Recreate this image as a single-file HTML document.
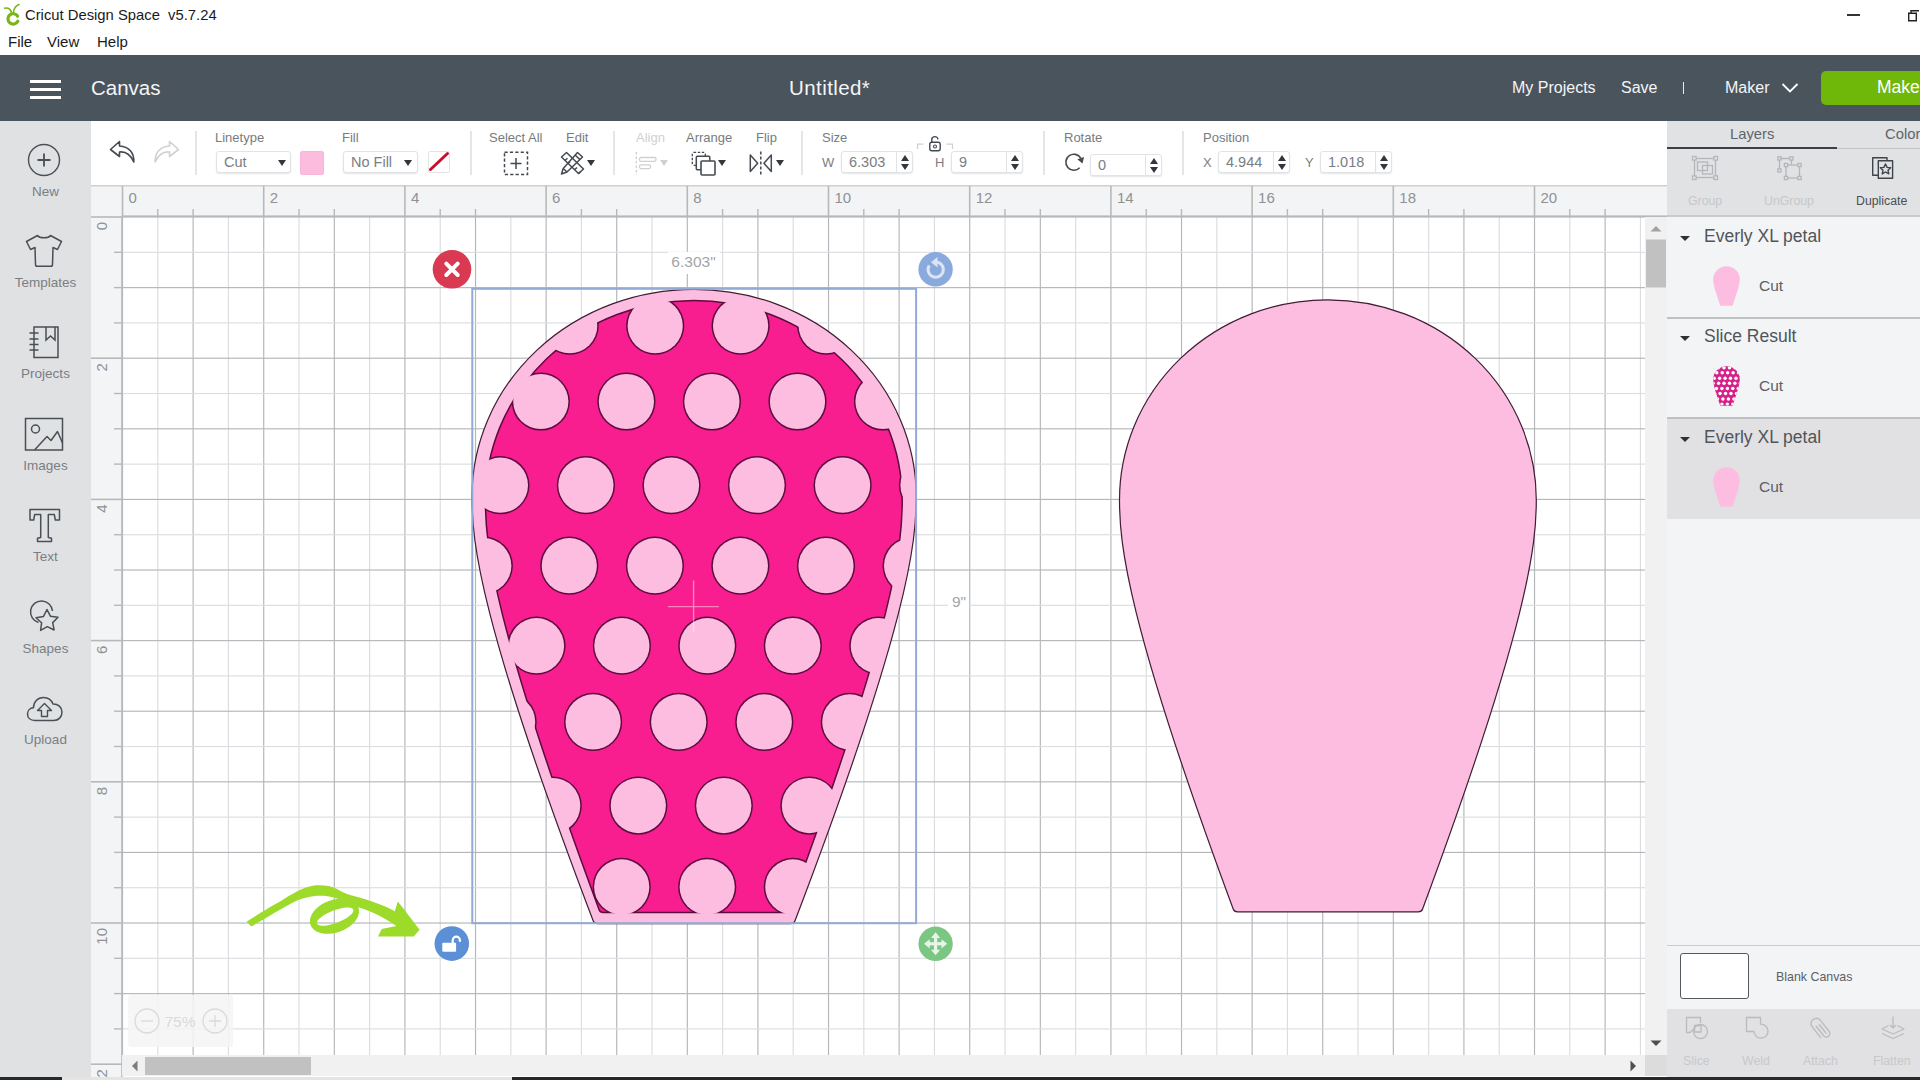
<!DOCTYPE html>
<html><head><meta charset="utf-8"><title>Cricut Design Space</title>
<style>
html,body{margin:0;padding:0;background:#fff;}
body{width:1920px;height:1080px;overflow:hidden;position:relative;font-family:"Liberation Sans",sans-serif;}
.abs{position:absolute;}
.t{position:absolute;white-space:nowrap;line-height:1;}
.sb{left:0;width:91px;text-align:center;font-size:13.5px;color:#7a7e83;}
.lbl{top:131px;font-size:13px;color:#777b80;}
.vdiv{position:absolute;top:131px;width:1.5px;height:44px;background:#e4e5e6;}
.inp{position:absolute;box-sizing:border-box;border:1px solid #e2e3e4;border-radius:3px;background:#fff;box-shadow:0 1px 1.5px rgba(0,0,0,0.10);}
.inp span{position:absolute;top:3px;font-size:14.5px;color:#7a7e83;line-height:1;white-space:nowrap;}
.dd{position:absolute;width:0;height:0;border-style:solid;border-width:6px 4.5px 0 4.5px;border-color:#33373c transparent transparent transparent;}
.spv{position:absolute;left:54px;top:0;width:1px;height:20px;background:#e2e3e4;}
.up{position:absolute;left:58.5px;top:3px;width:0;height:0;border-style:solid;border-width:0 4px 6px 4px;border-color:transparent transparent #33373c transparent;}
.dn{position:absolute;left:58.5px;top:11.5px;width:0;height:0;border-style:solid;border-width:6px 4px 0 4px;border-color:#33373c transparent transparent transparent;}
</style></head><body>

<svg id="cv" width="1920" height="1080" viewBox="0 0 1920 1080" style="position:absolute;left:0;top:0" font-family="Liberation Sans, sans-serif">
<defs>
<clipPath id="cvclip"><rect x="122" y="217" width="1523" height="838"/></clipPath>
<mask id="mA" maskUnits="userSpaceOnUse" x="0" y="0" width="1920" height="1080"><path d="M485.40,500.60 A208.40,200.20 0 0 1 902.20,500.60 C902.20,544.60 895.40,620.90 788.40,909.90 Q787.60,912.40 784.10,912.40 L603.50,912.40 Q600.00,912.40 599.20,909.90 C492.20,620.90 485.40,544.60 485.40,500.60Z" fill="#fff" stroke="#fff" stroke-width="1.5"/><g fill="#000"><circle cx="569.7" cy="325.7" r="27.6" /><circle cx="655.2" cy="325.7" r="27.6" /><circle cx="740.6" cy="325.7" r="27.6" /><circle cx="826.2" cy="325.7" r="27.6" /><circle cx="540.8" cy="401.5" r="27.6" /><circle cx="626.4" cy="401.5" r="27.6" /><circle cx="711.9" cy="401.5" r="27.6" /><circle cx="797.5" cy="401.5" r="27.6" /><circle cx="883.0" cy="401.5" r="27.6" /><circle cx="500.4" cy="485.2" r="27.6" /><circle cx="585.9" cy="485.2" r="27.6" /><circle cx="671.5" cy="485.2" r="27.6" /><circle cx="757.0" cy="485.2" r="27.6" /><circle cx="842.6" cy="485.2" r="27.6" /><circle cx="928.0" cy="485.2" r="27.6" /><circle cx="483.8" cy="565.7" r="27.6" /><circle cx="569.3" cy="565.7" r="27.6" /><circle cx="654.9" cy="565.7" r="27.6" /><circle cx="740.4" cy="565.7" r="27.6" /><circle cx="826.0" cy="565.7" r="27.6" /><circle cx="911.6" cy="565.7" r="27.6" /><circle cx="536.5" cy="645.7" r="27.6" /><circle cx="621.9" cy="645.7" r="27.6" /><circle cx="707.3" cy="645.7" r="27.6" /><circle cx="792.8" cy="645.7" r="27.6" /><circle cx="878.3" cy="645.7" r="27.6" /><circle cx="507.6" cy="721.9" r="27.6" /><circle cx="593.1" cy="721.9" r="27.6" /><circle cx="678.7" cy="721.9" r="27.6" /><circle cx="764.3" cy="721.9" r="27.6" /><circle cx="849.8" cy="721.9" r="27.6" /><circle cx="552.7" cy="805.6" r="27.6" /><circle cx="638.3" cy="805.6" r="27.6" /><circle cx="723.8" cy="805.6" r="27.6" /><circle cx="809.4" cy="805.6" r="27.6" /><circle cx="895.0" cy="805.6" r="27.6" /><circle cx="536.2" cy="886.9" r="27.6" /><circle cx="621.7" cy="886.9" r="27.6" /><circle cx="707.2" cy="886.9" r="27.6" /><circle cx="792.8" cy="886.9" r="27.6" /><circle cx="878.3" cy="886.9" r="27.6" /></g></mask>
<mask id="mB" maskUnits="userSpaceOnUse" x="0" y="0" width="1920" height="1080"><path d="M485.40,500.60 A208.40,200.20 0 0 1 902.20,500.60 C902.20,544.60 895.40,620.90 788.40,909.90 Q787.60,912.40 784.10,912.40 L603.50,912.40 Q600.00,912.40 599.20,909.90 C492.20,620.90 485.40,544.60 485.40,500.60Z" fill="#fff" stroke="#000" stroke-width="1.5"/><g fill="#000"><circle cx="569.7" cy="325.7" r="29.1" /><circle cx="655.2" cy="325.7" r="29.1" /><circle cx="740.6" cy="325.7" r="29.1" /><circle cx="826.2" cy="325.7" r="29.1" /><circle cx="540.8" cy="401.5" r="29.1" /><circle cx="626.4" cy="401.5" r="29.1" /><circle cx="711.9" cy="401.5" r="29.1" /><circle cx="797.5" cy="401.5" r="29.1" /><circle cx="883.0" cy="401.5" r="29.1" /><circle cx="500.4" cy="485.2" r="29.1" /><circle cx="585.9" cy="485.2" r="29.1" /><circle cx="671.5" cy="485.2" r="29.1" /><circle cx="757.0" cy="485.2" r="29.1" /><circle cx="842.6" cy="485.2" r="29.1" /><circle cx="928.0" cy="485.2" r="29.1" /><circle cx="483.8" cy="565.7" r="29.1" /><circle cx="569.3" cy="565.7" r="29.1" /><circle cx="654.9" cy="565.7" r="29.1" /><circle cx="740.4" cy="565.7" r="29.1" /><circle cx="826.0" cy="565.7" r="29.1" /><circle cx="911.6" cy="565.7" r="29.1" /><circle cx="536.5" cy="645.7" r="29.1" /><circle cx="621.9" cy="645.7" r="29.1" /><circle cx="707.3" cy="645.7" r="29.1" /><circle cx="792.8" cy="645.7" r="29.1" /><circle cx="878.3" cy="645.7" r="29.1" /><circle cx="507.6" cy="721.9" r="29.1" /><circle cx="593.1" cy="721.9" r="29.1" /><circle cx="678.7" cy="721.9" r="29.1" /><circle cx="764.3" cy="721.9" r="29.1" /><circle cx="849.8" cy="721.9" r="29.1" /><circle cx="552.7" cy="805.6" r="29.1" /><circle cx="638.3" cy="805.6" r="29.1" /><circle cx="723.8" cy="805.6" r="29.1" /><circle cx="809.4" cy="805.6" r="29.1" /><circle cx="895.0" cy="805.6" r="29.1" /><circle cx="536.2" cy="886.9" r="29.1" /><circle cx="621.7" cy="886.9" r="29.1" /><circle cx="707.2" cy="886.9" r="29.1" /><circle cx="792.8" cy="886.9" r="29.1" /><circle cx="878.3" cy="886.9" r="29.1" /></g></mask>
</defs>
<rect x="122" y="217" width="1523" height="838" fill="#fff"/>
<g clip-path="url(#cvclip)"><rect x="121.95" y="217" width="1.15" height="838" fill="#b4b6b9"/><rect x="157.25" y="217" width="1.15" height="838" fill="#dcdde0"/><rect x="192.55" y="217" width="1.15" height="838" fill="#b4b6b9"/><rect x="227.85" y="217" width="1.15" height="838" fill="#dcdde0"/><rect x="263.15" y="217" width="1.15" height="838" fill="#b4b6b9"/><rect x="298.45" y="217" width="1.15" height="838" fill="#dcdde0"/><rect x="333.75" y="217" width="1.15" height="838" fill="#b4b6b9"/><rect x="369.05" y="217" width="1.15" height="838" fill="#dcdde0"/><rect x="404.35" y="217" width="1.15" height="838" fill="#b4b6b9"/><rect x="439.65" y="217" width="1.15" height="838" fill="#dcdde0"/><rect x="474.95" y="217" width="1.15" height="838" fill="#b4b6b9"/><rect x="510.25" y="217" width="1.15" height="838" fill="#dcdde0"/><rect x="545.55" y="217" width="1.15" height="838" fill="#b4b6b9"/><rect x="580.85" y="217" width="1.15" height="838" fill="#dcdde0"/><rect x="616.15" y="217" width="1.15" height="838" fill="#b4b6b9"/><rect x="651.45" y="217" width="1.15" height="838" fill="#dcdde0"/><rect x="686.75" y="217" width="1.15" height="838" fill="#b4b6b9"/><rect x="722.05" y="217" width="1.15" height="838" fill="#dcdde0"/><rect x="757.35" y="217" width="1.15" height="838" fill="#b4b6b9"/><rect x="792.65" y="217" width="1.15" height="838" fill="#dcdde0"/><rect x="827.95" y="217" width="1.15" height="838" fill="#b4b6b9"/><rect x="863.25" y="217" width="1.15" height="838" fill="#dcdde0"/><rect x="898.55" y="217" width="1.15" height="838" fill="#b4b6b9"/><rect x="933.85" y="217" width="1.15" height="838" fill="#dcdde0"/><rect x="969.15" y="217" width="1.15" height="838" fill="#b4b6b9"/><rect x="1004.45" y="217" width="1.15" height="838" fill="#dcdde0"/><rect x="1039.75" y="217" width="1.15" height="838" fill="#b4b6b9"/><rect x="1075.05" y="217" width="1.15" height="838" fill="#dcdde0"/><rect x="1110.35" y="217" width="1.15" height="838" fill="#b4b6b9"/><rect x="1145.65" y="217" width="1.15" height="838" fill="#dcdde0"/><rect x="1180.95" y="217" width="1.15" height="838" fill="#b4b6b9"/><rect x="1216.25" y="217" width="1.15" height="838" fill="#dcdde0"/><rect x="1251.55" y="217" width="1.15" height="838" fill="#b4b6b9"/><rect x="1286.85" y="217" width="1.15" height="838" fill="#dcdde0"/><rect x="1322.15" y="217" width="1.15" height="838" fill="#b4b6b9"/><rect x="1357.45" y="217" width="1.15" height="838" fill="#dcdde0"/><rect x="1392.75" y="217" width="1.15" height="838" fill="#b4b6b9"/><rect x="1428.05" y="217" width="1.15" height="838" fill="#dcdde0"/><rect x="1463.35" y="217" width="1.15" height="838" fill="#b4b6b9"/><rect x="1498.65" y="217" width="1.15" height="838" fill="#dcdde0"/><rect x="1533.95" y="217" width="1.15" height="838" fill="#b4b6b9"/><rect x="1569.25" y="217" width="1.15" height="838" fill="#dcdde0"/><rect x="1604.55" y="217" width="1.15" height="838" fill="#b4b6b9"/><rect x="1639.85" y="217" width="1.15" height="838" fill="#dcdde0"/><rect x="122" y="216.45" width="1523" height="1.15" fill="#b4b6b9"/><rect x="122" y="251.75" width="1523" height="1.15" fill="#dcdde0"/><rect x="122" y="287.05" width="1523" height="1.15" fill="#b4b6b9"/><rect x="122" y="322.35" width="1523" height="1.15" fill="#dcdde0"/><rect x="122" y="357.65" width="1523" height="1.15" fill="#b4b6b9"/><rect x="122" y="392.95" width="1523" height="1.15" fill="#dcdde0"/><rect x="122" y="428.25" width="1523" height="1.15" fill="#b4b6b9"/><rect x="122" y="463.55" width="1523" height="1.15" fill="#dcdde0"/><rect x="122" y="498.85" width="1523" height="1.15" fill="#b4b6b9"/><rect x="122" y="534.15" width="1523" height="1.15" fill="#dcdde0"/><rect x="122" y="569.45" width="1523" height="1.15" fill="#b4b6b9"/><rect x="122" y="604.75" width="1523" height="1.15" fill="#dcdde0"/><rect x="122" y="640.05" width="1523" height="1.15" fill="#b4b6b9"/><rect x="122" y="675.35" width="1523" height="1.15" fill="#dcdde0"/><rect x="122" y="710.65" width="1523" height="1.15" fill="#b4b6b9"/><rect x="122" y="745.95" width="1523" height="1.15" fill="#dcdde0"/><rect x="122" y="781.25" width="1523" height="1.15" fill="#b4b6b9"/><rect x="122" y="816.55" width="1523" height="1.15" fill="#dcdde0"/><rect x="122" y="851.85" width="1523" height="1.15" fill="#b4b6b9"/><rect x="122" y="887.15" width="1523" height="1.15" fill="#dcdde0"/><rect x="122" y="922.45" width="1523" height="1.15" fill="#b4b6b9"/><rect x="122" y="957.75" width="1523" height="1.15" fill="#dcdde0"/><rect x="122" y="993.05" width="1523" height="1.15" fill="#b4b6b9"/><rect x="122" y="1028.35" width="1523" height="1.15" fill="#dcdde0"/></g>
<!-- rulers -->
<rect x="91" y="186" width="1576" height="31" fill="#f3f4f6"/>
<rect x="91" y="217" width="31" height="863" fill="#f3f4f6"/>
<rect x="91" y="185" width="1576" height="1.5" fill="#cfcfcf"/>
<rect x="122" y="215.4" width="1545" height="1.6" fill="#b8b8b8"/>
<rect x="121.2" y="217" width="1.6" height="860" fill="#b8b8b8"/>
<rect x="121.70" y="186" width="1.6" height="31" fill="#b8b8b8"/><text x="128.5" y="203" font-size="15" fill="#8f9194">0</text><rect x="157.10" y="209" width="1.4" height="8" fill="#b8b8b8"/><rect x="192.40" y="209" width="1.4" height="8" fill="#b8b8b8"/><rect x="262.90" y="186" width="1.6" height="31" fill="#b8b8b8"/><text x="269.7" y="203" font-size="15" fill="#8f9194">2</text><rect x="298.30" y="209" width="1.4" height="8" fill="#b8b8b8"/><rect x="333.60" y="209" width="1.4" height="8" fill="#b8b8b8"/><rect x="404.10" y="186" width="1.6" height="31" fill="#b8b8b8"/><text x="410.9" y="203" font-size="15" fill="#8f9194">4</text><rect x="439.50" y="209" width="1.4" height="8" fill="#b8b8b8"/><rect x="474.80" y="209" width="1.4" height="8" fill="#b8b8b8"/><rect x="545.30" y="186" width="1.6" height="31" fill="#b8b8b8"/><text x="552.1" y="203" font-size="15" fill="#8f9194">6</text><rect x="580.70" y="209" width="1.4" height="8" fill="#b8b8b8"/><rect x="616.00" y="209" width="1.4" height="8" fill="#b8b8b8"/><rect x="686.50" y="186" width="1.6" height="31" fill="#b8b8b8"/><text x="693.3" y="203" font-size="15" fill="#8f9194">8</text><rect x="721.90" y="209" width="1.4" height="8" fill="#b8b8b8"/><rect x="757.20" y="209" width="1.4" height="8" fill="#b8b8b8"/><rect x="827.70" y="186" width="1.6" height="31" fill="#b8b8b8"/><text x="834.5" y="203" font-size="15" fill="#8f9194">10</text><rect x="863.10" y="209" width="1.4" height="8" fill="#b8b8b8"/><rect x="898.40" y="209" width="1.4" height="8" fill="#b8b8b8"/><rect x="968.90" y="186" width="1.6" height="31" fill="#b8b8b8"/><text x="975.7" y="203" font-size="15" fill="#8f9194">12</text><rect x="1004.30" y="209" width="1.4" height="8" fill="#b8b8b8"/><rect x="1039.60" y="209" width="1.4" height="8" fill="#b8b8b8"/><rect x="1110.10" y="186" width="1.6" height="31" fill="#b8b8b8"/><text x="1116.9" y="203" font-size="15" fill="#8f9194">14</text><rect x="1145.50" y="209" width="1.4" height="8" fill="#b8b8b8"/><rect x="1180.80" y="209" width="1.4" height="8" fill="#b8b8b8"/><rect x="1251.30" y="186" width="1.6" height="31" fill="#b8b8b8"/><text x="1258.1" y="203" font-size="15" fill="#8f9194">16</text><rect x="1286.70" y="209" width="1.4" height="8" fill="#b8b8b8"/><rect x="1322.00" y="209" width="1.4" height="8" fill="#b8b8b8"/><rect x="1392.50" y="186" width="1.6" height="31" fill="#b8b8b8"/><text x="1399.3" y="203" font-size="15" fill="#8f9194">18</text><rect x="1427.90" y="209" width="1.4" height="8" fill="#b8b8b8"/><rect x="1463.20" y="209" width="1.4" height="8" fill="#b8b8b8"/><rect x="1533.70" y="186" width="1.6" height="31" fill="#b8b8b8"/><text x="1540.5" y="203" font-size="15" fill="#8f9194">20</text><rect x="1569.10" y="209" width="1.4" height="8" fill="#b8b8b8"/><rect x="1604.40" y="209" width="1.4" height="8" fill="#b8b8b8"/>
<rect x="91" y="216.20" width="31" height="1.6" fill="#b8b8b8"/><text transform="translate(107,222.0) rotate(-90)" text-anchor="end" font-size="15" fill="#8f9194">0</text><rect x="114" y="251.60" width="8" height="1.4" fill="#b8b8b8"/><rect x="114" y="286.90" width="8" height="1.4" fill="#b8b8b8"/><rect x="114" y="322.20" width="8" height="1.4" fill="#b8b8b8"/><rect x="91" y="357.40" width="31" height="1.6" fill="#b8b8b8"/><text transform="translate(107,363.2) rotate(-90)" text-anchor="end" font-size="15" fill="#8f9194">2</text><rect x="114" y="392.80" width="8" height="1.4" fill="#b8b8b8"/><rect x="114" y="428.10" width="8" height="1.4" fill="#b8b8b8"/><rect x="114" y="463.40" width="8" height="1.4" fill="#b8b8b8"/><rect x="91" y="498.60" width="31" height="1.6" fill="#b8b8b8"/><text transform="translate(107,504.4) rotate(-90)" text-anchor="end" font-size="15" fill="#8f9194">4</text><rect x="114" y="534.00" width="8" height="1.4" fill="#b8b8b8"/><rect x="114" y="569.30" width="8" height="1.4" fill="#b8b8b8"/><rect x="114" y="604.60" width="8" height="1.4" fill="#b8b8b8"/><rect x="91" y="639.80" width="31" height="1.6" fill="#b8b8b8"/><text transform="translate(107,645.6) rotate(-90)" text-anchor="end" font-size="15" fill="#8f9194">6</text><rect x="114" y="675.20" width="8" height="1.4" fill="#b8b8b8"/><rect x="114" y="710.50" width="8" height="1.4" fill="#b8b8b8"/><rect x="114" y="745.80" width="8" height="1.4" fill="#b8b8b8"/><rect x="91" y="781.00" width="31" height="1.6" fill="#b8b8b8"/><text transform="translate(107,786.8) rotate(-90)" text-anchor="end" font-size="15" fill="#8f9194">8</text><rect x="114" y="816.40" width="8" height="1.4" fill="#b8b8b8"/><rect x="114" y="851.70" width="8" height="1.4" fill="#b8b8b8"/><rect x="114" y="887.00" width="8" height="1.4" fill="#b8b8b8"/><rect x="91" y="922.20" width="31" height="1.6" fill="#b8b8b8"/><text transform="translate(107,928.0) rotate(-90)" text-anchor="end" font-size="15" fill="#8f9194">10</text><rect x="114" y="957.60" width="8" height="1.4" fill="#b8b8b8"/><rect x="114" y="992.90" width="8" height="1.4" fill="#b8b8b8"/><rect x="114" y="1028.20" width="8" height="1.4" fill="#b8b8b8"/><rect x="91" y="1063.40" width="31" height="1.6" fill="#b8b8b8"/><text transform="translate(107,1069.2) rotate(-90)" text-anchor="end" font-size="15" fill="#8f9194">12</text>
<!-- right petal -->
<path d="M1119.50,500.00 A208.40,200.20 0 0 1 1536.30,500.00 C1536.30,544.00 1529.50,620.30 1422.50,909.30 Q1421.70,911.80 1418.20,911.80 L1237.60,911.80 Q1234.10,911.80 1233.30,909.30 C1126.30,620.30 1119.50,544.00 1119.50,500.00Z" fill="#FCBDE0" stroke="#3f1d33" stroke-width="1.2"/>
<!-- left outer petal -->
<path d="M471.95,496.81 A222.15,207.51 0 0 1 916.25,496.81 C916.25,542.41 909.01,621.50 794.94,921.05 Q794.09,923.64 790.36,923.64 L597.84,923.64 Q594.11,923.64 593.26,921.05 C479.19,621.50 471.95,542.41 471.95,496.81Z" fill="#FCBDE0" stroke="#3f1d33" stroke-width="1.2"/>
<rect x="0" y="0" width="1920" height="1080" fill="#5e0a3e" mask="url(#mA)"/>
<rect x="0" y="0" width="1920" height="1080" fill="#F81E90" mask="url(#mB)"/>
<!-- selection box -->
<rect x="472.3" y="288.8" width="443.8" height="634.4" fill="none" stroke="#93a9d6" stroke-width="2"/>
<!-- dimension labels -->
<rect x="668" y="252" width="52" height="22" fill="#fff"/>
<text x="693.5" y="267.3" text-anchor="middle" font-size="15.5" fill="#a3a5a8">6.303"</text>
<rect x="948" y="590" width="21" height="22" fill="#fff"/>
<text x="959" y="606.5" text-anchor="middle" font-size="15.5" fill="#a3a5a8">9"</text>
<!-- crosshair -->
<path d="M693.6 580.5v51M668 606.6h51" stroke="#fff" stroke-opacity="0.45" stroke-width="1.4"/>
<!-- handles -->
<circle cx="452" cy="269.3" r="19.3" fill="#d93a52"/>
<path d="M446.3 263.6l11.4 11.4M457.7 263.6l-11.4 11.4" stroke="#fff" stroke-width="4" stroke-linecap="round"/>
<circle cx="935.6" cy="269.3" r="17.2" fill="#8aaade"/>
<path d="M929.3 265.5 A7.6 7.6 0 1 0 936 262" fill="none" stroke="#d9e4f5" stroke-width="3"/>
<path d="M937.5 257 L931 262.3 L937.5 267.5 Z" fill="#d9e4f5"/>
<circle cx="451.8" cy="943.6" r="17.3" fill="#5b8fd6"/>
<rect x="442.3" y="942.8" width="13.8" height="9" rx="1" fill="#fff"/>
<path d="M452.7 943 v-2.8 a3.6 3.6 0 0 1 7.2 0 v1.5" fill="none" stroke="#fff" stroke-width="2.2"/>
<circle cx="935.6" cy="943.8" r="17.2" fill="#7cc683"/>
<g fill="#e6f5e7"><path d="M935.6 932.3l4.6 5.6h-9.2z"/><path d="M935.6 955.3l4.6-5.6h-9.2z"/><path d="M924.1 943.8l5.6-4.6v9.2z"/><path d="M947.1 943.8l-5.6-4.6v9.2z"/><rect x="934" y="937" width="3.2" height="13.6"/><rect x="928.8" y="942.2" width="13.6" height="3.2"/></g>
<!-- green arrow -->
<g fill="#9ddb2b">
<path d="M246.6,921.8 C258,914 274,905 284,899 C297,891 305,887 314,885.6 C322,884.6 330,885.6 336,888.5 C341,891 345,893.8 350,895 C362,898 382,904 394.8,911.2 L397.7,901.4 C404,909 414,922 419.6,929.8 L413.8,936.4 L378,936.4 L381.7,929.1 L396.3,926.1 C385,918 371,911 359,907.5 C349,903.5 338,897 324,895.7 C312,895.2 303,897.7 295,901.5 C283,907.5 266,918 251.3,926.6 Z"/>
<path fill-rule="evenodd" d="M358.5,907.5 L359.0,910.0 L359.0,912.6 L358.4,915.4 L357.2,918.1 L355.4,920.9 L353.1,923.5 L350.3,925.9 L347.2,928.1 L343.8,930.0 L340.1,931.5 L336.3,932.7 L332.4,933.5 L328.6,933.8 L324.9,933.7 L321.5,933.2 L318.4,932.3 L315.7,930.9 L313.4,929.2 L311.7,927.2 L310.5,924.9 L310.0,922.4 L310.0,919.8 L310.6,917.0 L311.8,914.3 L313.6,911.5 L315.9,908.9 L318.7,906.5 L321.8,904.3 L325.2,902.4 L328.9,900.9 L332.7,899.7 L336.6,898.9 L340.4,898.6 L344.1,898.7 L347.5,899.2 L350.6,900.1 L353.3,901.5 L355.6,903.2 L357.3,905.2Z M353.3,909.6 L352.7,908.8 L351.7,908.2 L350.3,907.7 L348.5,907.5 L346.4,907.5 L344.0,907.8 L341.4,908.2 L338.6,908.9 L335.8,909.7 L332.9,910.7 L330.1,911.9 L327.5,913.2 L325.0,914.5 L322.7,915.9 L320.8,917.4 L319.2,918.8 L318.0,920.1 L317.3,921.4 L317.0,922.5 L317.1,923.6 L317.7,924.4 L318.7,925.0 L320.1,925.5 L321.9,925.7 L324.0,925.7 L326.4,925.4 L329.0,925.0 L331.8,924.3 L334.6,923.5 L337.5,922.5 L340.3,921.3 L342.9,920.0 L345.4,918.7 L347.7,917.3 L349.6,915.8 L351.2,914.4 L352.4,913.1 L353.1,911.8 L353.4,910.7Z"/>
</g>
<!-- zoom control -->
<rect x="128" y="995" width="105" height="52" rx="3" fill="#f4f4f5" fill-opacity="0.86"/>
<circle cx="147" cy="1021" r="12" fill="none" stroke="#d9dadb" stroke-width="1.3"/>
<path d="M141 1021h12" stroke="#d9dadb" stroke-width="1.3"/>
<text x="180" y="1026.5" text-anchor="middle" font-size="15.5" fill="#d9dadb">75%</text>
<circle cx="215" cy="1021" r="12" fill="none" stroke="#d9dadb" stroke-width="1.3"/>
<path d="M209 1021h12M215 1015v12" stroke="#d9dadb" stroke-width="1.3"/>
<!-- scrollbars -->
<rect x="1645" y="217" width="22" height="838" fill="#f1f1f1"/>
<rect x="1646" y="239.5" width="20" height="48" fill="#c1c1c1"/>
<path d="M1650.5 231.5 l5.5-5.5 5.5 5.5z" fill="#a3a3a3"/>
<path d="M1650.5 1040.5 l5.5 5.5 5.5-5.5z" fill="#4f4f4f"/>
<rect x="122" y="1055" width="1523" height="21" fill="#f1f1f1"/>
<rect x="145" y="1057" width="166" height="18" fill="#c1c1c1"/>
<path d="M137.5 1060.5 l-5.5 5.5 5.5 5.5z" fill="#7d7d7d"/>
<path d="M1630.5 1060.5 l5.5 5.5 -5.5 5.5z" fill="#4f4f4f"/>
<rect x="1645" y="1055" width="22" height="21" fill="#dcdcdc"/>

</svg>

<!-- TITLE BAR -->
<div class="abs" style="left:0;top:0;width:1920px;height:55px;background:#fff;"></div>
<svg class="abs" style="left:2px;top:3px" width="20" height="24" viewBox="0 0 20 24">
  <path d="M15.6 13.2 A5.2 5.2 0 1 0 15.8 18.2" fill="none" stroke="#7ab51d" stroke-width="3.2" stroke-linecap="round"/>
  <path d="M9.5 9.5 C8.5 6 6 4.5 2.5 5.2" fill="none" stroke="#7ab51d" stroke-width="1.6" stroke-linecap="round"/>
  <path d="M11.5 9.3 C12 5.5 14 2.6 17 1.6" fill="none" stroke="#7ab51d" stroke-width="1.6" stroke-linecap="round"/>
</svg>
<div class="t" id="ttl" style="left:25px;top:8px;font-size:14.8px;color:#1a1a1a;">Cricut Design Space&nbsp; v5.7.24</div>
<div class="t" style="left:8px;top:34px;font-size:15px;color:#1a1a1a;">File</div>
<div class="t" style="left:47px;top:34px;font-size:15px;color:#1a1a1a;">View</div>
<div class="t" style="left:97px;top:34px;font-size:15px;color:#1a1a1a;">Help</div>
<div class="abs" style="left:1847px;top:14px;width:13px;height:1.5px;background:#333;"></div>
<svg class="abs" style="left:1906px;top:8px" width="14" height="14" viewBox="0 0 14 14"><path d="M2.7 5.2h7.6v7.6h-7.6z M5 5V2.8h8" fill="none" stroke="#222" stroke-width="1.4"/></svg>

<!-- HEADER -->
<div class="abs" style="left:0;top:55px;width:1920px;height:66px;background:#4a545d;"></div>
<div class="abs" style="left:30px;top:80px;width:31px;height:2.6px;background:#fff;"></div>
<div class="abs" style="left:30px;top:88px;width:31px;height:2.6px;background:#fff;"></div>
<div class="abs" style="left:30px;top:96px;width:31px;height:2.6px;background:#fff;"></div>
<div class="t" style="left:91px;top:78px;font-size:20.5px;color:#f4f5f6;">Canvas</div>
<div class="t" id="untitled" style="left:789px;top:78px;font-size:20.5px;color:#f4f5f6;letter-spacing:0.42px;">Untitled*</div>
<div class="t" style="left:1512px;top:80px;font-size:16px;color:#f4f5f6;">My Projects</div>
<div class="t" style="left:1621px;top:80px;font-size:16px;color:#f4f5f6;">Save</div>
<div class="abs" style="left:1683px;top:82px;width:1.3px;height:12px;background:#e8eaec;"></div>
<div class="t" style="left:1725px;top:80px;font-size:16px;color:#f4f5f6;">Maker</div>
<svg class="abs" style="left:1781px;top:82px" width="18" height="12" viewBox="0 0 18 12"><path d="M1.5 2 L9 9.5 L16.5 2" fill="none" stroke="#fff" stroke-width="1.8"/></svg>
<div class="abs" style="left:1821px;top:71px;width:110px;height:34px;background:#6fb80a;border-radius:5px;"></div>
<div class="t" style="left:1877px;top:79px;font-size:17.5px;color:#fff;">Make</div>

<!-- LEFT SIDEBAR -->
<div class="abs" style="left:0;top:121px;width:91px;height:959px;background:#e0e1e3;"></div>
<!-- New -->
<svg class="abs" style="left:26px;top:142px" width="36" height="36" viewBox="0 0 36 36"><circle cx="18" cy="18" r="15.5" fill="none" stroke="#4a4f55" stroke-width="1.4"/><path d="M18 11.5v13M11.5 18h13" stroke="#4a4f55" stroke-width="1.8"/></svg>
<div class="t sb" style="top:185px;">New</div>
<!-- Templates -->
<svg class="abs" style="left:24px;top:233px" width="40" height="36" viewBox="0 0 40 36"><path d="M13.5 2.5 C15.5 5.5 24.5 5.5 26.5 2.5 L37.5 8.5 L33.5 16.5 L29 14.5 L28.5 31.5 Q28.5 33.3 26.8 33.3 L13.2 33.3 Q11.5 33.3 11.5 31.5 L11 14.5 L6.5 16.5 L2.5 8.5 Z" fill="none" stroke="#4a4f55" stroke-width="1.5" stroke-linejoin="round"/></svg>
<div class="t sb" style="top:276px;">Templates</div>
<!-- Projects -->
<svg class="abs" style="left:28px;top:325px" width="34" height="36" viewBox="0 0 34 36"><rect x="6" y="2" width="24" height="30.5" fill="none" stroke="#4a4f55" stroke-width="1.5"/><path d="M18 2v13l4.5-4 4.5 4V2" fill="none" stroke="#4a4f55" stroke-width="1.5"/><path d="M1.5 8h9M1.5 14h9M1.5 19.5h9M1.5 25h9" stroke="#4a4f55" stroke-width="1.5"/></svg>
<div class="t sb" style="top:367px;">Projects</div>
<!-- Images -->
<svg class="abs" style="left:24px;top:417px" width="40" height="36" viewBox="0 0 40 36"><rect x="1.5" y="1.5" width="37" height="31.5" fill="none" stroke="#4a4f55" stroke-width="1.5"/><circle cx="11.5" cy="12" r="4" fill="none" stroke="#4a4f55" stroke-width="1.5"/><path d="M10.5 33 L23 19.5 L27 23.5 L33.5 14.5 L38.5 26" fill="none" stroke="#4a4f55" stroke-width="1.5" stroke-linejoin="round"/></svg>
<div class="t sb" style="top:459px;">Images</div>
<!-- Text -->
<svg class="abs" style="left:28px;top:507px" width="34" height="36" viewBox="0 0 34 36"><path d="M2 2.5h29.5v10.5h-4.2l-1-5.5h-6v23l3.2.7v3.3H9.5v-3.3l3.2-.7v-23h-6l-1 5.5H2z" fill="none" stroke="#4a4f55" stroke-width="1.5" stroke-linejoin="round"/></svg>
<div class="t sb" style="top:550px;">Text</div>
<!-- Shapes -->
<svg class="abs" style="left:28px;top:598px" width="36" height="38" viewBox="0 0 36 38"><path d="M10.5 24.5 A11 11 0 1 1 24.5 13" fill="none" stroke="#4a4f55" stroke-width="1.5"/><path d="M19 11.5 L22.5 18.3 L30 19.3 L24.7 24.6 L26.1 32 L19.3 28.6 L12.6 32.4 L13.6 24.8 L8 19.8 L15.5 18.4 Z" fill="#e0e1e3" stroke="#4a4f55" stroke-width="1.5" stroke-linejoin="round"/></svg>
<div class="t sb" style="top:642px;">Shapes</div>
<!-- Upload -->
<svg class="abs" style="left:26px;top:694px" width="38" height="30" viewBox="0 0 38 30"><path d="M9 26.5 C4 26.5 1.5 23.5 1.5 20 C1.5 16.5 4 14 7.5 13.8 C7.5 8 11.5 3.5 17.5 3.5 C22 3.5 25.5 6 27 10 C32 9.8 36 13.3 36 18 C36 23 32.5 26.5 28 26.5 Z" fill="none" stroke="#4a4f55" stroke-width="1.5" stroke-linejoin="round"/><path d="M18.5 9.5 L25.5 16.5 H21.5 V22.5 H15.5 V16.5 H11.5 Z" fill="none" stroke="#4a4f55" stroke-width="1.4" stroke-linejoin="round"/></svg>
<div class="t sb" style="top:733px;">Upload</div>

<!-- TOOLBAR -->
<div class="abs" style="left:91px;top:121px;width:1576px;height:64px;background:#fff;"></div>
<!-- undo/redo -->
<svg class="abs" style="left:108px;top:139px" width="30" height="26" viewBox="0 0 30 26"><path d="M11.5 2.5 L2.5 10.5 L11.5 17.5 V13 C17.5 12.3 22.5 15.5 25.8 23 C26.3 14 21 7.5 11.5 7 Z" fill="none" stroke="#444a50" stroke-width="1.6" stroke-linejoin="round"/></svg>
<svg class="abs" style="left:151px;top:139px" width="30" height="26" viewBox="0 0 30 26"><path d="M18.5 2.5 L27.5 10.5 L18.5 17.5 V13 C12.5 12.3 7.5 15.5 4.2 23 C3.7 14 9 7.5 18.5 7 Z" fill="none" stroke="#cfd1d3" stroke-width="1.6" stroke-linejoin="round"/></svg>
<div class="vdiv" style="left:195px;"></div>
<div class="t lbl" style="left:215px;">Linetype</div>
<div class="inp" style="left:216px;top:151px;width:75px;height:22px;"><span style="left:7px;">Cut</span><i class="dd" style="left:61px;top:8px;"></i></div>
<div class="abs" style="left:300px;top:151px;width:24px;height:24px;background:#fbbcdd;border-radius:3px;box-shadow:0 0 0 0.5px #f3b0d3 inset;"></div>
<div class="t lbl" style="left:342px;">Fill</div>
<div class="inp" style="left:343px;top:151px;width:75px;height:22px;"><span style="left:7px;">No Fill</span><i class="dd" style="left:60px;top:8px;"></i></div>
<div class="abs" style="left:428px;top:151px;width:22px;height:22px;border:1px solid #e3e3e3;border-radius:2px;background:#fff;box-sizing:border-box;"></div>
<svg class="abs" style="left:427px;top:150px" width="24" height="24" viewBox="0 0 24 24"><path d="M3.5 19.5 L20.5 3.5" stroke="#c8102e" stroke-width="3" stroke-linecap="round"/></svg>
<div class="vdiv" style="left:470px;"></div>
<div class="t lbl" style="left:489px;">Select All</div>
<svg class="abs" style="left:503px;top:151px" width="26" height="25" viewBox="0 0 26 25"><rect x="1.5" y="1.2" width="23" height="22.3" fill="none" stroke="#444a50" stroke-width="1.5" stroke-dasharray="3.2 2.2"/><path d="M13 7v11M7.5 12.4h11" stroke="#444a50" stroke-width="1.5"/></svg>
<div class="t lbl" style="left:566px;">Edit</div>
<svg class="abs" style="left:560px;top:151px" width="26" height="25" viewBox="0 0 26 25"><g fill="none" stroke="#444a50" stroke-width="1.5" stroke-linejoin="round"><path d="M1.5 6 L6.5 1.5 L23.5 18 L18.5 22.5 Z"/><path d="M5 9.5l2.5-2.2M8 12.4l2-1.8M18.5 22.6 l2-1.8M14.5 18.7l2.5-2.2"/><path d="M17.5 1.5 L22.5 6 L7 21 L1.5 23 L3.2 17.5 Z"/><path d="M3.2 17.5 L7 21M15 4l5 4.6"/></g></svg>
<i class="dd" style="left:587px;top:160px;"></i>
<div class="vdiv" style="left:613px;"></div>
<div class="t lbl" style="left:636px;color:#cfd0d2;">Align</div>
<svg class="abs" style="left:634px;top:151px" width="26" height="25" viewBox="0 0 26 25"><path d="M2.3 1v23" stroke="#cfd0d2" stroke-width="1.3" stroke-dasharray="2.5 2"/><rect x="5.5" y="6.5" width="16.5" height="3.8" rx="1.5" fill="none" stroke="#cfd0d2" stroke-width="1.3"/><rect x="5.5" y="13.8" width="11" height="3.8" rx="1.5" fill="none" stroke="#cfd0d2" stroke-width="1.3"/></svg>
<i class="dd" style="left:660px;top:160px;border-top-color:#cfd0d2;"></i>
<div class="t lbl" style="left:686px;">Arrange</div>
<svg class="abs" style="left:690px;top:150px" width="27" height="27" viewBox="0 0 27 27"><rect x="2.3" y="2.3" width="13" height="13" rx="1.5" fill="none" stroke="#444a50" stroke-width="1.3" stroke-dasharray="2.4 1.6"/><rect x="6.3" y="6.3" width="13.5" height="13.5" rx="1" fill="#fff" stroke="#444a50" stroke-width="1.5"/><rect x="11" y="11" width="14" height="14" rx="1" fill="#fff" stroke="#444a50" stroke-width="1.6"/></svg>
<i class="dd" style="left:718px;top:160px;"></i>
<div class="t lbl" style="left:756px;">Flip</div>
<svg class="abs" style="left:748px;top:150px" width="26" height="27" viewBox="0 0 26 27"><path d="M2.3 5 L2.3 21.5 L9.7 13.2 Z" fill="none" stroke="#444a50" stroke-width="1.5" stroke-linejoin="round"/><path d="M23.3 5 L23.3 21.5 L15.9 13.2 Z" fill="none" stroke="#444a50" stroke-width="1.5" stroke-linejoin="round"/><path d="M12.8 1.5v24" stroke="#444a50" stroke-width="1.5" stroke-dasharray="3 2"/></svg>
<i class="dd" style="left:775.5px;top:160px;"></i>
<div class="vdiv" style="left:801px;"></div>
<div class="t lbl" style="left:822px;">Size</div>
<div class="t" style="left:822px;top:156px;font-size:13px;color:#7a7d81;">W</div>
<div class="inp" style="left:841px;top:151px;width:72px;height:22px;"><span style="left:7px;">6.303</span><b class="spv"></b><i class="up"></i><i class="dn"></i></div>
<svg class="abs" style="left:919.5px;top:134px" width="30" height="20" viewBox="0 0 30 20" overflow="visible"><path d="M-2.5 15v-4.8h6M32.5 15v-4.8h-6" fill="none" stroke="#cfd0d2" stroke-width="1.2"/><rect x="9.8" y="8.3" width="10.4" height="8.4" rx="2" fill="#fff" stroke="#444a50" stroke-width="1.4"/><path d="M11.8 8.3 V6 A3.1 3.1 0 0 1 18 5.4" fill="none" stroke="#444a50" stroke-width="1.4"/><circle cx="15" cy="12.5" r="1.5" fill="none" stroke="#444a50" stroke-width="1.1"/></svg>
<div class="t" style="left:935px;top:156px;font-size:13px;color:#7a7d81;">H</div>
<div class="inp" style="left:951px;top:151px;width:72px;height:22px;"><span style="left:7px;">9</span><b class="spv"></b><i class="up"></i><i class="dn"></i></div>
<div class="vdiv" style="left:1043px;"></div>
<div class="t lbl" style="left:1064px;">Rotate</div>
<svg class="abs" style="left:1062px;top:150px" width="24" height="24" viewBox="0 0 24 24"><path d="M17.6 17.8 A8 8 0 1 1 18.8 8.2" fill="none" stroke="#444a50" stroke-width="1.6"/><path d="M15.3 9.3 L22 7 L20.5 13.6 Z" fill="#444a50"/></svg>
<div class="inp" style="left:1090px;top:154px;width:72px;height:22px;"><span style="left:7px;">0</span><b class="spv"></b><i class="up"></i><i class="dn"></i></div>
<div class="vdiv" style="left:1182px;"></div>
<div class="t lbl" style="left:1203px;">Position</div>
<div class="t" style="left:1203px;top:156px;font-size:13px;color:#7a7d81;">X</div>
<div class="inp" style="left:1218px;top:151px;width:72px;height:22px;"><span style="left:7px;">4.944</span><b class="spv"></b><i class="up"></i><i class="dn"></i></div>
<div class="t" style="left:1305px;top:156px;font-size:13px;color:#7a7d81;">Y</div>
<div class="inp" style="left:1320px;top:151px;width:72px;height:22px;"><span style="left:7px;">1.018</span><b class="spv"></b><i class="up"></i><i class="dn"></i></div>

<!-- RIGHT PANEL -->
<div class="abs" style="left:1667px;top:121px;width:253px;height:959px;background:#f3f4f6;"></div>
<div class="abs" style="left:1667px;top:121px;width:253px;height:95px;background:#e1e2e4;"></div>
<div class="t" style="left:1730px;top:126.5px;font-size:14.8px;color:#60656b;">Layers</div>
<div class="t" style="left:1885px;top:126.5px;font-size:14.8px;color:#60656b;">Color Sync</div>
<div class="abs" style="left:1667px;top:147px;width:170px;height:2.4px;background:#3c4147;"></div>
<div class="abs" style="left:1837px;top:147.6px;width:83px;height:1.8px;background:#c3c4c6;"></div>
<!-- group -->
<svg class="abs" style="left:1691px;top:155px" width="28" height="26" viewBox="0 0 28 26"><g fill="none" stroke="#b4b6b9" stroke-width="1.3"><rect x="3.5" y="3.5" width="21" height="19"/><rect x="6.5" y="7" width="10" height="8.5"/><rect x="11.5" y="10.5" width="10" height="8.5"/><rect x="1.5" y="1.5" width="3.6" height="3.6" fill="#e1e2e4"/><rect x="22.9" y="1.5" width="3.6" height="3.6" fill="#e1e2e4"/><rect x="1.5" y="20.9" width="3.6" height="3.6" fill="#e1e2e4"/><rect x="22.9" y="20.9" width="3.6" height="3.6" fill="#e1e2e4"/></g></svg>
<div class="t" style="left:1688px;top:195px;font-size:12.3px;color:#c6c8ca;">Group</div>
<!-- ungroup -->
<svg class="abs" style="left:1776px;top:155px" width="28" height="26" viewBox="0 0 28 26"><g fill="none" stroke="#b4b6b9" stroke-width="1.3"><path d="M3.5 15.5V3.5h12v6"/><rect x="10" y="10" width="13.5" height="13"/><rect x="1.8" y="1.8" width="3.2" height="3.2" fill="#e1e2e4"/><rect x="13.8" y="1.8" width="3.2" height="3.2" fill="#e1e2e4"/><rect x="1.8" y="13.8" width="3.2" height="3.2" fill="#e1e2e4"/><rect x="8.4" y="8.4" width="3.2" height="3.2" fill="#e1e2e4"/><rect x="21.9" y="8.4" width="3.2" height="3.2" fill="#e1e2e4"/><rect x="8.4" y="21.4" width="3.2" height="3.2" fill="#e1e2e4"/><rect x="21.9" y="21.4" width="3.2" height="3.2" fill="#e1e2e4"/></g></svg>
<div class="t" style="left:1764px;top:195px;font-size:12.3px;color:#c6c8ca;">UnGroup</div>
<!-- duplicate -->
<svg class="abs" style="left:1870px;top:155px" width="26" height="26" viewBox="0 0 26 26"><g fill="none" stroke="#3f444a" stroke-width="1.4" stroke-linejoin="round"><rect x="2.7" y="2.7" width="14.3" height="17.6" fill="#e1e2e4"/><path d="M8.3 8 l1.3 3 3.1.3 -2.4 2 .8 3.1 -2.8-1.7"/><rect x="8.3" y="5.7" width="14.3" height="17.6" fill="#e1e2e4"/><path d="M15.5 9 l1.6 3.4 3.6.4 -2.7 2.5 .8 3.6 -3.3-1.9 -3.3 1.9 .8-3.6 -2.7-2.5 3.6-.4z"/></g></svg>
<div class="t" style="left:1856px;top:195px;font-size:12.3px;color:#4a4f55;">Duplicate</div>
<div class="abs" style="left:1667px;top:215.3px;width:253px;height:1.6px;background:#c9cacc;"></div>

<!-- layers -->
<div class="abs" style="left:1667px;top:418px;width:253px;height:101px;background:#e1e1e3;"></div>
<div class="abs" style="left:1667px;top:316.5px;width:253px;height:2px;background:#bfc0c2;"></div>
<div class="abs" style="left:1667px;top:416.5px;width:253px;height:2px;background:#bfc0c2;"></div>
<i class="dd" style="left:1680px;top:235.5px;border-width:5.5px 5px 0 5px;border-top-color:#2d3136;"></i>
<i class="dd" style="left:1680px;top:335.5px;border-width:5.5px 5px 0 5px;border-top-color:#2d3136;"></i>
<i class="dd" style="left:1680px;top:436.5px;border-width:5.5px 5px 0 5px;border-top-color:#2d3136;"></i>
<div class="t" style="left:1704px;top:228px;font-size:17.5px;color:#50555b;">Everly XL petal</div>
<div class="t" style="left:1704px;top:328px;font-size:17.5px;color:#50555b;">Slice Result</div>
<div class="t" style="left:1704px;top:429px;font-size:17.5px;color:#50555b;">Everly XL petal</div>
<div class="t" style="left:1759px;top:278px;font-size:15.5px;color:#5b6066;">Cut</div>
<div class="t" style="left:1759px;top:378px;font-size:15.5px;color:#5b6066;">Cut</div>
<div class="t" style="left:1759px;top:479px;font-size:15.5px;color:#5b6066;">Cut</div>
<svg class="abs" style="left:1713px;top:266px" width="27" height="40" viewBox="-212 -3 424 618" preserveAspectRatio="none"><path d="M-208.40,200.20 A208.40,200.20 0 0 1 208.40,200.20 C208.40,244.20 201.60,320.50 94.60,609.50 Q93.80,612.00 90.30,612.00 L-90.30,612.00 Q-93.80,612.00 -94.60,609.50 C-201.60,320.50 -208.40,244.20 -208.40,200.20Z" fill="#FCBDE0"/></svg><svg class="abs" style="left:1713px;top:366px" width="27" height="40" viewBox="-212 -3 424 618" preserveAspectRatio="none"><defs><clipPath id="tc"><path d="M-208.40,200.20 A208.40,200.20 0 0 1 208.40,200.20 C208.40,244.20 201.60,320.50 94.60,609.50 Q93.80,612.00 90.30,612.00 L-90.30,612.00 Q-93.80,612.00 -94.60,609.50 C-201.60,320.50 -208.40,244.20 -208.40,200.20Z"/></clipPath></defs><path d="M-208.40,200.20 A208.40,200.20 0 0 1 208.40,200.20 C208.40,244.20 201.60,320.50 94.60,609.50 Q93.80,612.00 90.30,612.00 L-90.30,612.00 Q-93.80,612.00 -94.60,609.50 C-201.60,320.50 -208.40,244.20 -208.40,200.20Z" fill="#d6218a"/><g clip-path="url(#tc)" fill="#fff"><circle cx="-124" cy="25" r="27"/><circle cx="-39" cy="25" r="27"/><circle cx="47" cy="25" r="27"/><circle cx="132" cy="25" r="27"/><circle cx="-153" cy="101" r="27"/><circle cx="-67" cy="101" r="27"/><circle cx="18" cy="101" r="27"/><circle cx="104" cy="101" r="27"/><circle cx="189" cy="101" r="27"/><circle cx="-193" cy="185" r="27"/><circle cx="-108" cy="185" r="27"/><circle cx="-22" cy="185" r="27"/><circle cx="63" cy="185" r="27"/><circle cx="149" cy="185" r="27"/><circle cx="234" cy="185" r="27"/><circle cx="-210" cy="265" r="27"/><circle cx="-124" cy="265" r="27"/><circle cx="-39" cy="265" r="27"/><circle cx="47" cy="265" r="27"/><circle cx="132" cy="265" r="27"/><circle cx="218" cy="265" r="27"/><circle cx="-157" cy="345" r="27"/><circle cx="-72" cy="345" r="27"/><circle cx="14" cy="345" r="27"/><circle cx="99" cy="345" r="27"/><circle cx="184" cy="345" r="27"/><circle cx="-186" cy="422" r="27"/><circle cx="-101" cy="422" r="27"/><circle cx="-15" cy="422" r="27"/><circle cx="70" cy="422" r="27"/><circle cx="156" cy="422" r="27"/><circle cx="-141" cy="505" r="27"/><circle cx="-56" cy="505" r="27"/><circle cx="30" cy="505" r="27"/><circle cx="116" cy="505" r="27"/><circle cx="201" cy="505" r="27"/><circle cx="-158" cy="586" r="27"/><circle cx="-72" cy="586" r="27"/><circle cx="13" cy="586" r="27"/><circle cx="99" cy="586" r="27"/><circle cx="184" cy="586" r="27"/></g></svg><svg class="abs" style="left:1713px;top:467px" width="27" height="40" viewBox="-212 -3 424 618" preserveAspectRatio="none"><path d="M-208.40,200.20 A208.40,200.20 0 0 1 208.40,200.20 C208.40,244.20 201.60,320.50 94.60,609.50 Q93.80,612.00 90.30,612.00 L-90.30,612.00 Q-93.80,612.00 -94.60,609.50 C-201.60,320.50 -208.40,244.20 -208.40,200.20Z" fill="#FCBDE0"/></svg>
<!-- blank canvas -->
<div class="abs" style="left:1667px;top:944.5px;width:253px;height:1.6px;background:#c9cacc;"></div>
<div class="abs" style="left:1680px;top:953px;width:69px;height:46px;box-sizing:border-box;border:1.6px solid #54595f;border-radius:3px;background:#fff;"></div>
<div class="t" style="left:1776px;top:970.5px;font-size:12.4px;color:#5b6066;">Blank Canvas</div>
<div class="abs" style="left:1667px;top:1009px;width:253px;height:71px;background:#e1e1e3;"></div>
<!-- slice -->
<svg class="abs" style="left:1684px;top:1015px" width="28" height="26" viewBox="0 0 28 26"><g fill="none" stroke="#b9bbbe" stroke-width="1.3"><path d="M11 13 L6 17.5 H2.5 V2.5 H16.5 V8"/><circle cx="16.5" cy="16.5" r="7"/><path d="M10.5 10.5 h6.5 v6.5 h-6.5z"/></g></svg>
<div class="t" style="left:1683px;top:1055px;font-size:12.3px;color:#c6c8ca;">Slice</div>
<!-- weld -->
<svg class="abs" style="left:1744px;top:1015px" width="28" height="26" viewBox="0 0 28 26"><path d="M2.5 2.5 H16.5 V9.2 A7 7 0 1 1 10 16.5 H2.5 Z" fill="none" stroke="#b9bbbe" stroke-width="1.3" stroke-linejoin="round"/></svg>
<div class="t" style="left:1742px;top:1055px;font-size:12.3px;color:#c6c8ca;">Weld</div>
<!-- attach -->
<svg class="abs" style="left:1808px;top:1014px" width="28" height="28" viewBox="0 0 28 28"><g transform="rotate(-38 14 14)" fill="none" stroke="#b9bbbe" stroke-width="1.4" stroke-linecap="round"><path d="M10.5 9 V21 A3.5 3.5 0 0 0 17.5 21 V6.5 A5.3 5.3 0 0 0 7 6.5 V20.5"/><path d="M14 9.5 V20.5"/></g></svg>
<div class="t" style="left:1803px;top:1055px;font-size:12.3px;color:#c6c8ca;">Attach</div>
<!-- flatten -->
<svg class="abs" style="left:1879px;top:1015px" width="28" height="26" viewBox="0 0 28 26"><g fill="none" stroke="#b9bbbe" stroke-width="1.3" stroke-linejoin="round"><path d="M14 1.5v11M11 10l3 3 3-3"/><path d="M9.5 10.5 L3 14 l11 5 11-5 -6.5-3.5"/><path d="M3 18.5 l11 5 11-5"/></g></svg>
<div class="t" style="left:1873px;top:1055px;font-size:12.3px;color:#c6c8ca;">Flatten</div>

<!-- bottom strip -->
<div class="abs" style="left:0;top:1076.5px;width:1920px;height:3.5px;background:#25292b;"></div>
<div class="abs" style="left:62px;top:1076.8px;width:450px;height:3.2px;background:#e4e4e4;"></div>
</body></html>
